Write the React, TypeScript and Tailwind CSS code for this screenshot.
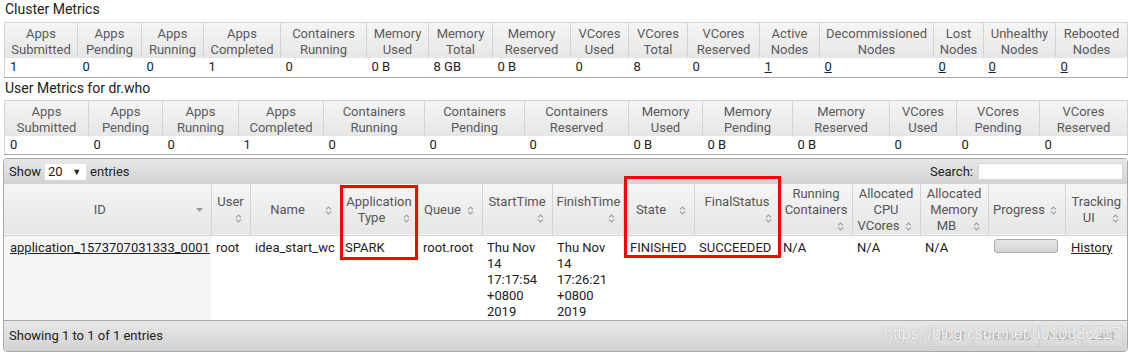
import React from 'react';

type MetricCol = { w: number; h: [string, string]; v: string; link?: boolean };

const clusterCols: MetricCol[] = [
  { w: 73, h: ['Apps', 'Submitted'], v: '1' },
  { w: 64, h: ['Apps', 'Pending'], v: '0' },
  { w: 62, h: ['Apps', 'Running'], v: '0' },
  { w: 77, h: ['Apps', 'Completed'], v: '1' },
  { w: 86, h: ['Containers', 'Running'], v: '0' },
  { w: 62, h: ['Memory', 'Used'], v: '0 B' },
  { w: 64, h: ['Memory', 'Total'], v: '8 GB' },
  { w: 78, h: ['Memory', 'Reserved'], v: '0 B' },
  { w: 58, h: ['VCores', 'Used'], v: '0' },
  { w: 59, h: ['VCores', 'Total'], v: '8' },
  { w: 72, h: ['VCores', 'Reserved'], v: '0' },
  { w: 60, h: ['Active', 'Nodes'], v: '1', link: true },
  { w: 114, h: ['Decommissioned', 'Nodes'], v: '0', link: true },
  { w: 50, h: ['Lost', 'Nodes'], v: '0', link: true },
  { w: 72, h: ['Unhealthy', 'Nodes'], v: '0', link: true },
  { w: 72, h: ['Rebooted', 'Nodes'], v: '0', link: true },
];

const userCols: MetricCol[] = [
  { w: 84, h: ['Apps', 'Submitted'], v: '0' },
  { w: 74, h: ['Apps', 'Pending'], v: '0' },
  { w: 76, h: ['Apps', 'Running'], v: '0' },
  { w: 85, h: ['Apps', 'Completed'], v: '1' },
  { w: 101, h: ['Containers', 'Running'], v: '0' },
  { w: 100, h: ['Containers', 'Pending'], v: '0' },
  { w: 104, h: ['Containers', 'Reserved'], v: '0' },
  { w: 74, h: ['Memory', 'Used'], v: '0 B' },
  { w: 90, h: ['Memory', 'Pending'], v: '0 B' },
  { w: 97, h: ['Memory', 'Reserved'], v: '0 B' },
  { w: 67, h: ['VCores', 'Used'], v: '0' },
  { w: 83, h: ['VCores', 'Pending'], v: '0' },
  { w: 88, h: ['VCores', 'Reserved'], v: '0' },
];

type AppCol = { w: number; lines: string[]; below?: boolean; sorted?: boolean };

// sort icon drops to its own line where the label leaves no room for it
const appCols: AppCol[] = [
  { w: 207, lines: ['ID'], sorted: true },
  { w: 39, lines: ['User'], below: true },
  { w: 90, lines: ['Name'] },
  { w: 78, lines: ['Application', 'Type'] },
  { w: 64, lines: ['Queue'] },
  { w: 70, lines: ['StartTime'], below: true },
  { w: 71, lines: ['FinishTime'], below: true },
  { w: 71, lines: ['State'] },
  { w: 86, lines: ['FinalStatus'], below: true },
  { w: 72, lines: ['Running', 'Containers'], below: true },
  { w: 68, lines: ['Allocated', 'CPU', 'VCores'] },
  { w: 68, lines: ['Allocated', 'Memory', 'MB'] },
  { w: 77, lines: ['Progress'] },
  { w: 62, lines: ['Tracking', 'UI'] },
];

function SortIcon() {
  return (
    <svg width="7" height="9" viewBox="0 0 7 9">
      <path d="M1 3.5 L3.5 1 L6 3.5" fill="none" stroke="#a3a3a3" strokeWidth="1.1" />
      <path d="M1 5.5 L3.5 8 L6 5.5" fill="none" stroke="#a3a3a3" strokeWidth="1.1" />
    </svg>
  );
}

function SortedDesc() {
  return (
    <svg width="7" height="4" viewBox="0 0 7 4">
      <path d="M0 0 L7 0 L3.5 4 Z" fill="#9a9a9a" />
    </svg>
  );
}

function MetricTable({ cols }: { cols: MetricCol[] }) {
  return (
    <table className="ml-[4px] w-[1123px] table-fixed border-collapse border border-[#d3d3d3] border-b-[#a8a8a8]">
      <colgroup>
        {cols.map((c, i) => (
          <col key={i} style={{ width: c.w }} />
        ))}
      </colgroup>
      <thead>
        <tr className="bg-linear-to-b from-[#f5f5f5] to-[#e6e6e6]">
          {cols.map((c, i) => (
            <th
              key={i}
              className="border-l border-[#d3d3d3] px-[2px] pt-[3px] pb-0 text-center align-middle font-normal leading-4 text-[#5a5a5a]"
            >
              {c.h[0]}
              <br />
              {c.h[1]}
            </th>
          ))}
        </tr>
      </thead>
      <tbody>
        <tr className="bg-white">
          {cols.map((c, i) => (
            <td key={i} className="h-[19px] px-[5px] align-middle leading-4 text-[#222]">
              {c.link ? <span className="underline">{c.v}</span> : c.v}
            </td>
          ))}
        </tr>
      </tbody>
    </table>
  );
}

function AppHeader({ col }: { col: AppCol }) {
  return (
    <th className="border-l border-[#d3d3d3] px-[4px] pt-[2px] pb-0 align-middle font-normal leading-4 text-[#555] first:border-l-0">
      <div className="flow-root text-center">
        {col.lines.map((l, i) => (
          <React.Fragment key={i}>
            {i > 0 && <br />}
            {l}
          </React.Fragment>
        ))}
        {col.below && <br />}
        <span className="float-right flex h-4 w-[15px] items-center justify-center">
          {col.sorted ? <SortedDesc /> : <SortIcon />}
        </span>
      </div>
    </th>
  );
}

export default function App() {
  return (
    <div className="relative h-[352px] w-[1129px] overflow-hidden bg-white font-['Roboto',sans-serif] text-[13px] text-[#222]">
      <div className="h-[22px] pl-[5px] text-[14px] leading-[19px] text-[#222]">Cluster Metrics</div>
      <MetricTable cols={clusterCols} />
      <div className="h-[22px] pl-[5px] text-[14px] leading-[20px] text-[#222]">User Metrics for dr.who</div>
      <MetricTable cols={userCols} />

      <div className="mt-[3px] ml-[3px] w-[1125px] rounded-[4px] border border-[#aaa]">
        {/* toolbar */}
        <div className="flex h-[25px] items-center justify-between rounded-t-[4px] bg-linear-to-b from-[#e8e8e8] to-[#d2d2d2] pr-[4px] pl-[5px]">
          <div className="flex items-center">
            <span>Show</span>
            <span className="ml-[4px] flex h-[16px] w-[41px] items-center bg-white pl-[3px] leading-4">
              <span>20</span>
              <span className="mr-[5px] ml-auto text-[9px]">▼</span>
            </span>
            <span className="ml-[4px]">entries</span>
          </div>
          <div className="flex items-center">
            <span>Search:</span>
            <span className="ml-[5px] h-[17px] w-[145px] border border-[#d6d6d6] bg-white" />
          </div>
        </div>

        <table className="w-[1123px] table-fixed border-collapse">
          <colgroup>
            {appCols.map((c, i) => (
              <col key={i} style={{ width: c.w }} />
            ))}
          </colgroup>
          <thead>
            <tr className="h-[51px] border-b border-[#d3d3d3] bg-linear-to-b from-[#f5f5f5] to-[#e6e6e6]">
              {appCols.map((c, i) => (
                <AppHeader key={i} col={c} />
              ))}
            </tr>
          </thead>
          <tbody>
            <tr className="h-[83px] align-top leading-4">
              <td className="bg-[#f5f5f5] px-[6px] pt-[4px]">
                <span className="underline">application_1573707031333_0001</span>
              </td>
              <td className="px-[5px] pt-[4px]">root</td>
              <td className="px-[5px] pt-[4px] whitespace-nowrap">idea_start_wc</td>
              <td className="px-[5px] pt-[4px]">SPARK</td>
              <td className="px-[5px] pt-[4px]">root.root</td>
              <td className="px-[5px] pt-[4px]">
                Thu Nov
                <br />14
                <br />17:17:54
                <br />+0800
                <br />2019
              </td>
              <td className="px-[5px] pt-[4px]">
                Thu Nov
                <br />14
                <br />17:26:21
                <br />+0800
                <br />2019
              </td>
              <td className="px-[7px] pt-[4px]">FINISHED</td>
              <td className="px-[5px] pt-[4px] whitespace-nowrap">SUCCEEDED</td>
              <td className="px-[3px] pt-[4px]">N/A</td>
              <td className="px-[5px] pt-[4px]">N/A</td>
              <td className="px-[5px] pt-[4px]">N/A</td>
              <td className="px-[6px] pt-[3px]">
                <div className="h-[14px] w-[64px] rounded-[3px] border border-[#aaa] bg-linear-to-b from-[#e6e6e6] to-[#d4d4d4]" />
              </td>
              <td className="px-[6px] pt-[4px]">
                <span className="underline">History</span>
              </td>
            </tr>
          </tbody>
        </table>

        {/* footer */}
        <div className="flex h-[31px] items-center justify-between rounded-b-[4px] border-t border-[#aaa] bg-linear-to-b from-[#e8e8e8] to-[#d2d2d2] pr-[4px] pl-[5px]">
          <span>Showing 1 to 1 of 1 entries</span>
          <div className="flex text-[#555] opacity-30">
            {['First', 'Previous', 'Next', 'Last'].map((b) => (
              <span key={b} className="border border-[#c5c5c5] bg-[#e6e6e6] px-[7px] leading-[20px]">
                {b}
              </span>
            ))}
          </div>
        </div>
      </div>

      {/* annotation boxes */}
      <div className="absolute top-[185px] left-[340px] h-[75px] w-[78px] border-[3px] border-[#f00]" />
      <div className="absolute top-[176px] left-[624px] h-[82px] w-[157px] border-[3px] border-[#f00]" />

      {/* watermark */}
      <div className="absolute top-[322px] left-[884px] font-['Liberation_Sans',sans-serif] text-[16px] leading-[24px] text-white/90 [text-shadow:0_0_1px_#8a8a8a]">
        https://blog.csdn.net/u010886217
      </div>
    </div>
  );
}
